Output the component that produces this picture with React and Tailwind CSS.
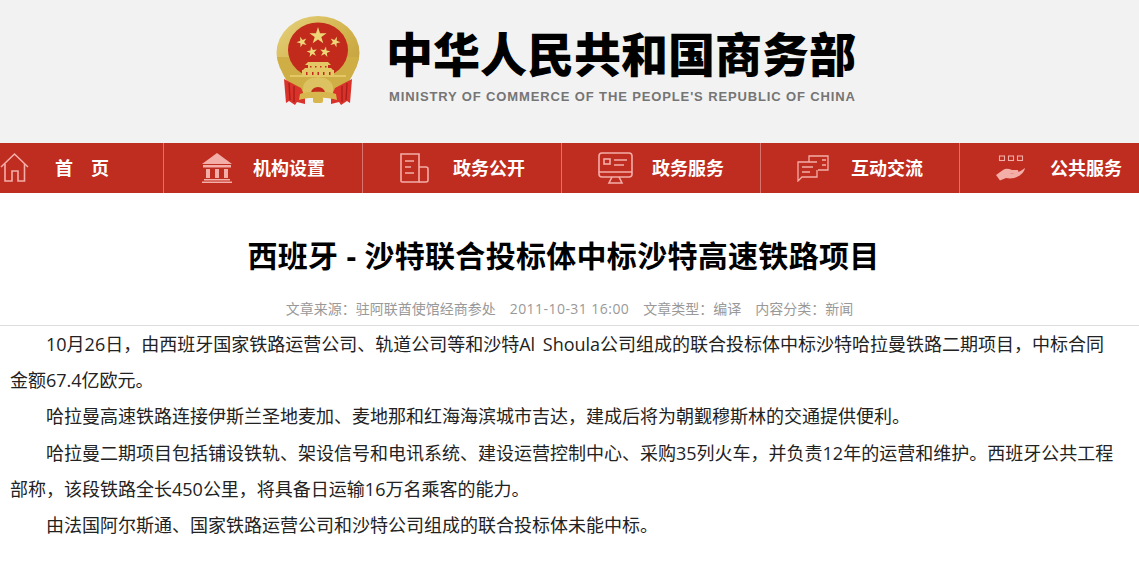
const yahei = { fontFamily: '"Open Sans", "Noto Sans CJK SC", sans-serif' };

const star = (cx, cy, r, rot = 0) => {
  const pts = [];
  for (let i = 0; i < 10; i++) {
    const rad = i % 2 === 0 ? r : r * 0.38;
    const a = ((rot - 90 + i * 36) * Math.PI) / 180;
    pts.push(`${(cx + rad * Math.cos(a)).toFixed(1)},${(cy + rad * Math.sin(a)).toFixed(1)}`);
  }
  return pts.join(' ');
};

const Emblem = () => (
  <svg width="86" height="94" viewBox="0 0 86 94" className="shrink-0">
    <defs>
      <linearGradient id="gold" x1="0" y1="0" x2="1" y2="1">
        <stop offset="0" stopColor="#e6d27e" />
        <stop offset="0.55" stopColor="#d2b24b" />
        <stop offset="1" stopColor="#bd9a38" />
      </linearGradient>
    </defs>
    {/* wreath */}
    <ellipse cx="43" cy="38" rx="41.500" ry="37" fill="url(#gold)" />
    <path d="M2 42 C6 60 16 76 30 82 L56 82 C70 76 80 60 84 42 Z" fill="#cfae45" />
    <ellipse cx="43" cy="35" rx="30" ry="27.500" fill="#c22a1c" />
    {/* ribbons */}
    <path d="M9 64 L26 73 L30 82 L30 89 L22 87 L20 90 L14 86 L11 88 Z" fill="#d8322a" />
    <path d="M77 64 L60 73 L56 82 L56 89 L64 87 L66 90 L72 86 L75 88 Z" fill="#d8322a" />
    <path d="M14 68 L15 85 M19 71 L19 87 M72 68 L71 85 M67 71 L67 87" stroke="#a81e18" strokeWidth="1.300" />
    {/* stars */}
    <g fill="#edd677">
      <polygon points={star(43, 21, 9)} />
      <polygon points={star(27, 27, 5.5, -20)} />
      <polygon points={star(60, 27, 5.5, 20)} />
      <polygon points={star(37, 37, 5.5, -10)} />
      <polygon points={star(50, 37, 5.5, 10)} />
    </g>
    {/* gate */}
    <g fill="#e3c865">
      <path d="M33 47 L53 47 L56 50 L30 50 Z" />
      <rect x="33" y="50" width="20" height="3" />
      <path d="M30 53 L56 53 L58 55 L28 55 Z" />
      <rect x="27" y="55" width="32" height="6" />
      <rect x="15" y="60" width="56" height="2" />
    </g>
    <g fill="#c22a1c">
      <rect x="35" y="51" width="1.500" height="1.500" />
      <rect x="40" y="51" width="1.500" height="1.500" />
      <rect x="45" y="51" width="1.500" height="1.500" />
      <rect x="50" y="51" width="1.500" height="1.500" />
      <rect x="31" y="57" width="1.500" height="3" />
      <rect x="37" y="57" width="1.500" height="3" />
      <rect x="42.500" y="57" width="1.500" height="3" />
      <rect x="48" y="57" width="1.500" height="3" />
      <rect x="54" y="57" width="1.500" height="3" />
    </g>
    {/* gear and lower ribbon */}
    <path d="M28 73 A15 11 0 0 1 58 73 L58 80 L28 80 Z" fill="#dcc260" />
    <path d="M36 78 A7 6 0 0 1 50 78 Z" fill="#c22a1c" />
    <path d="M25 79 C32 76 54 76 61 79 L62 85 C54 82 32 82 24 85 Z" fill="#d8b64e" />
    <rect x="38" y="81" width="10" height="7" rx="2" fill="#d8b64e" />
  </svg>
);

const pink = '#f4aea8';

const HomeIcon = () => (
  <svg width="30" height="32" viewBox="0 0 30 32" fill="none" stroke={pink} strokeWidth="1.6">
    <path d="M1 15 L14.5 2 L28 15" />
    <path d="M5 12 V29 H12 V19 H18 V29 H24.500 V12" />
  </svg>
);

const BankIcon = () => (
  <svg width="32" height="32" viewBox="0 0 32 32" fill={pink}>
    <path d="M16 1 L31 12 H1 Z" />
    <rect x="2" y="13" width="28" height="2.500" />
    <rect x="5" y="17" width="4" height="9" />
    <rect x="14" y="17" width="4" height="9" />
    <rect x="23" y="17" width="4" height="9" />
    <rect x="3" y="27" width="26" height="1.500" />
    <rect x="1" y="29.500" width="30" height="1.500" />
  </svg>
);

const DocIcon = () => (
  <svg width="30" height="30" viewBox="0 0 30 30" fill="none" stroke={pink} strokeWidth="1.6">
    <path d="M2 1 H20 V29 H3 A1 1 0 0 1 2 28 Z" />
    <path d="M20 14 H27 A2 2 0 0 1 29 16 V27 A2 2 0 0 1 27 29 H20" />
    <path d="M6 8 H15 M6 14 H12 M6 20 H15" />
  </svg>
);

const MonitorIcon = () => (
  <svg width="35" height="33" viewBox="0 0 35 33" fill="none" stroke={pink} strokeWidth="1.6">
    <rect x="1" y="1" width="33" height="24" rx="3" />
    <path d="M1 20 H34" />
    <rect x="6" y="7" width="6" height="5" />
    <path d="M16 8 H29 M16 13 H26" />
    <path d="M14 25 L11 31 H24 L21 25" />
  </svg>
);

const ChatIcon = () => (
  <svg width="32" height="27" viewBox="0 0 32 27" fill="none" stroke={pink} strokeWidth="1.300">
    <path d="M20 7 H1 V26 L5 22 H20 V15" />
    <path d="M12 7 V1 H31 V15 H21" />
    <path d="M5 12 H16 M5 17 H13" />
    <path d="M25 5 H29 M25 10 H29" />
  </svg>
);

const HandIcon = () => (
  <svg width="30" height="26" viewBox="0 0 30 26">
    <g fill="none" stroke={pink} strokeWidth="1.100">
      <rect x="3.500" y="1" width="5" height="4.500" />
      <rect x="12.500" y="1" width="5" height="4.500" />
      <rect x="21.500" y="1" width="5" height="4.500" />
    </g>
    <path d="M0 20 L7 15 C10 13 13 14 16 15 L21 15 C23 15 23 18 20 18 L14 18 C18 19 24 17 29 13 C28 19 20 25 10 23 L4 25.500 Z" fill={pink} />
  </svg>
);

const navItems = [
  { label: '首　页', icon: <HomeIcon />, width: 'w-[164px]', pad: 'pl-0', gap: 'gap-[25px]' },
  { label: '机构设置', icon: <BankIcon />, width: 'w-[199px]', pad: 'pl-[37px]', gap: 'gap-[20px]' },
  { label: '政务公开', icon: <DocIcon />, width: 'w-[199px]', pad: 'pl-[36px]', gap: 'gap-[24px]' },
  { label: '政务服务', icon: <MonitorIcon />, width: 'w-[199px]', pad: 'pl-[36px]', gap: 'gap-[19px]' },
  { label: '互动交流', icon: <ChatIcon />, width: 'w-[199px]', pad: 'pl-[36px]', gap: 'gap-[22px]' },
  { label: '公共服务', icon: <HandIcon />, width: 'w-[179px]', pad: 'pl-[36px]', gap: 'gap-[24px]' },
];

const paragraphs = [
  '10月26日，由西班牙国家铁路运营公司、轨道公司等和沙特Al Shoula公司组成的联合投标体中标沙特哈拉曼铁路二期项目，中标合同金额67.4亿欧元。',
  '哈拉曼高速铁路连接伊斯兰圣地麦加、麦地那和红海海滨城市吉达，建成后将为朝觐穆斯林的交通提供便利。',
  '哈拉曼二期项目包括铺设铁轨、架设信号和电讯系统、建设运营控制中心、采购35列火车，并负责12年的运营和维护。西班牙公共工程部称，该段铁路全长450公里，将具备日运输16万名乘客的能力。',
  '由法国阿尔斯通、国家铁路运营公司和沙特公司组成的联合投标体未能中标。',
];

export default function App() {
  return (
    <div className="w-[1139px] h-[561px] overflow-hidden bg-white" style={yahei}>
      {/* logo header */}
      <header className="h-[143px] bg-[#f2f2f2] flex items-start pl-[275px] pt-[15px] gap-[25px]">
        <Emblem />
        <div className="pt-[12px]">
          <div className="text-[47px] leading-[54px] font-black text-black whitespace-nowrap w-[470px]">
            中华人民共和国商务部
          </div>
          <div
            className="mt-[8px] ml-[3px] text-[13px] leading-[15px] font-bold text-[#757575] tracking-[0.87px] whitespace-nowrap"
            style={{ fontFamily: '"Liberation Sans", sans-serif' }}
          >
            MINISTRY OF COMMERCE OF THE PEOPLE'S REPUBLIC OF CHINA
          </div>
        </div>
      </header>

      {/* nav */}
      <nav className="h-[50px] bg-[#bf2c20] flex">
        {navItems.map((item, i) => (
          <div
            key={item.label}
            className={`${item.width} ${item.pad} ${item.gap} h-full flex items-center shrink-0 ${i < 5 ? 'border-r border-[#d9736b]' : ''}`}
          >
            {item.icon}
            <span className="text-[18px] font-bold text-white whitespace-nowrap">{item.label}</span>
          </div>
        ))}
      </nav>

      {/* article head */}
      <h1 className="mt-[40px] pr-[12px] text-center text-[30px] leading-[46px] font-bold text-black tracking-[0.3px]">
        西班牙 - 沙特联合投标体中标沙特高速铁路项目
      </h1>
      <div className="mt-[19px] h-[28px] border-b border-[#dddddd] flex justify-center gap-[14px] text-[14px] leading-[22px] text-[#999999] whitespace-nowrap">
        <span>文章来源：驻阿联酋使馆经商参处</span>
        <span className="tracking-[0.45px]">2011-10-31 16:00</span>
        <span>文章类型：编译</span>
        <span>内容分类：新闻</span>
      </div>

      {/* article body */}
      <div className="pl-[10px] pr-[20px] text-[18px] leading-[36.2px] text-[#222222] [word-spacing:3px]">
        {paragraphs.map((p) => (
          <p key={p.slice(0, 8)} className="indent-[36px]">
            {p}
          </p>
        ))}
      </div>
    </div>
  );
}
